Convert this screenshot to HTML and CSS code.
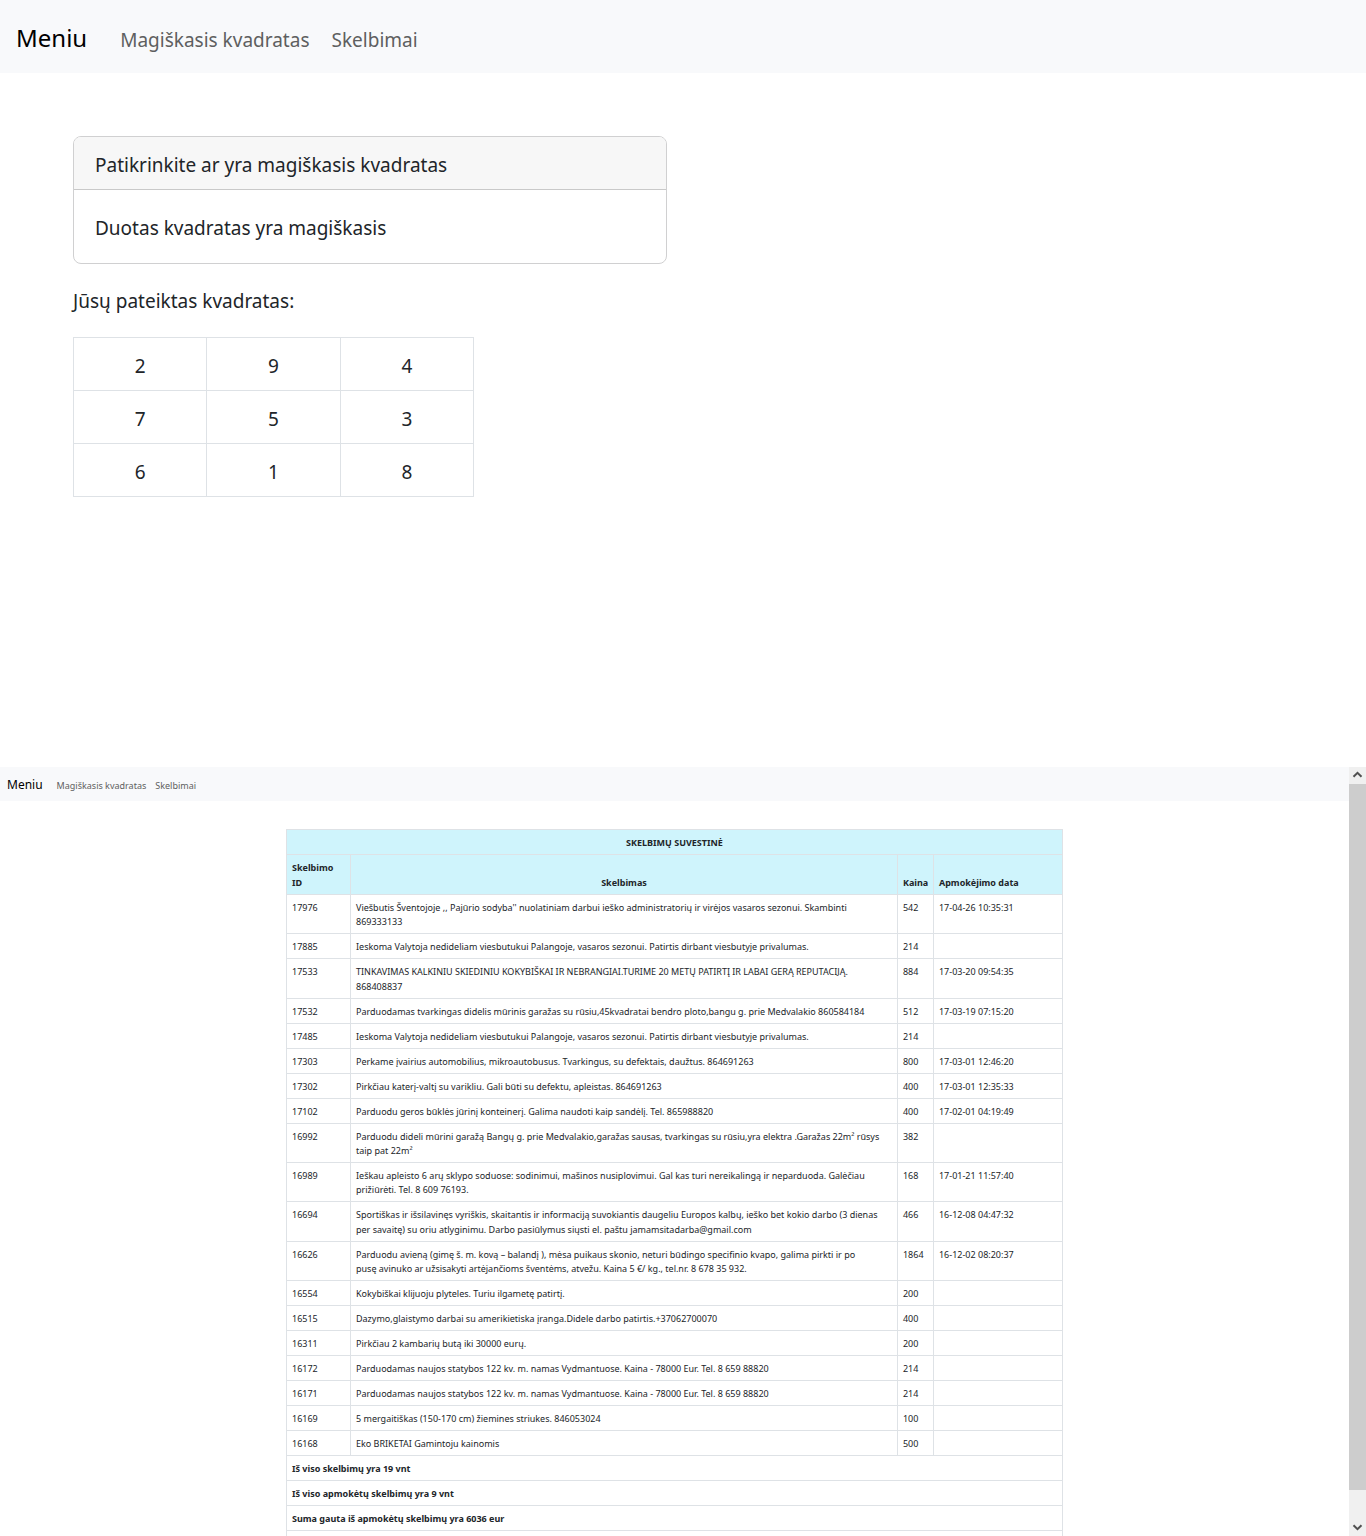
FILE: index.html
```html
<!DOCTYPE html>
<html lang="lt">
<head>
<meta charset="utf-8">
<meta name="viewport" content="width=device-width, initial-scale=1">
<title>Magiškasis kvadratas ir skelbimai</title>
<link rel="stylesheet" href="styles.css">
</head>
<body>
<section class="pane pane-square">
  <nav class="navbar">
    <a class="brand" href="#">Meniu</a>
    <a class="nav-link" href="#">Magiškasis kvadratas</a>
    <a class="nav-link" href="#">Skelbimai</a>
  </nav>
  <main class="content">
    <div class="card">
      <div class="card-header">Patikrinkite ar yra magiškasis kvadratas</div>
      <div class="card-body">Duotas kvadratas yra magiškasis</div>
    </div>
    <p class="caption">Jūsų pateiktas kvadratas:</p>
    <table class="square">
      <tbody>
        <tr><td>2</td><td>9</td><td>4</td></tr>
        <tr><td>7</td><td>5</td><td>3</td></tr>
        <tr><td>6</td><td>1</td><td>8</td></tr>
      </tbody>
    </table>
  </main>
</section>

<section class="pane pane-ads">
  <div class="view">
    <nav class="navbar navbar-small">
      <a class="brand" href="#">Meniu</a>
      <a class="nav-link" href="#">Magiškasis kvadratas</a>
      <a class="nav-link" href="#">Skelbimai</a>
    </nav>
    <table class="ads">
      <colgroup><col class="col-id"><col><col class="col-price"><col class="col-date"></colgroup>
      <thead>
        <tr class="title"><th colspan="4">SKELBIMŲ SUVESTINĖ</th></tr>
        <tr class="roomy"><th>Skelbimo ID</th><th class="center">Skelbimas</th><th>Kaina</th><th>Apmokėjimo data</th></tr>
      </thead>
      <tbody>
        <tr><td>17976</td><td>Viešbutis Šventojoje ,, Pajūrio sodyba'' nuolatiniam darbui ieško administratorių ir virėjos vasaros sezonui. Skambinti<br>869333133</td><td>542</td><td>17-04-26 10:35:31</td></tr>
        <tr><td>17885</td><td>Ieskoma Valytoja nedideliam viesbutukui Palangoje, vasaros sezonui. Patirtis dirbant viesbutyje privalumas.</td><td>214</td><td></td></tr>
        <tr class="roomy"><td>17533</td><td>TINKAVIMAS KALKINIU SKIEDINIU KOKYBIŠKAI IR NEBRANGIAI.TURIME 20 METŲ PATIRTĮ IR LABAI GERĄ REPUTACIJĄ.<br>868408837</td><td>884</td><td>17-03-20 09:54:35</td></tr>
        <tr><td>17532</td><td>Parduodamas tvarkingas didelis mūrinis garažas su rūsiu,45kvadratai bendro ploto,bangu g. prie Medvalakio 860584184</td><td>512</td><td>17-03-19 07:15:20</td></tr>
        <tr><td>17485</td><td>Ieskoma Valytoja nedideliam viesbutukui Palangoje, vasaros sezonui. Patirtis dirbant viesbutyje privalumas.</td><td>214</td><td></td></tr>
        <tr><td>17303</td><td>Perkame įvairius automobilius, mikroautobusus. Tvarkingus, su defektais, daužtus. 864691263</td><td>800</td><td>17-03-01 12:46:20</td></tr>
        <tr><td>17302</td><td>Pirkčiau katerį-valtį su varikliu. Gali būti su defektu, apleistas. 864691263</td><td>400</td><td>17-03-01 12:35:33</td></tr>
        <tr><td>17102</td><td>Parduodu geros būklės jūrinį konteinerį. Galima naudoti kaip sandėlį. Tel. 865988820</td><td>400</td><td>17-02-01 04:19:49</td></tr>
        <tr><td>16992</td><td>Parduodu dideli mūrini garažą Bangų g. prie Medvalakio,garažas sausas, tvarkingas su rūsiu,yra elektra .Garažas 22m² rūsys<br>taip pat 22m²</td><td>382</td><td></td></tr>
        <tr><td>16989</td><td>Ieškau apleisto 6 arų sklypo soduose: sodinimui, mašinos nusiplovimui. Gal kas turi nereikalingą ir neparduoda. Galėčiau<br>prižiūrėti. Tel. 8 609 76193.</td><td>168</td><td>17-01-21 11:57:40</td></tr>
        <tr class="roomy"><td>16694</td><td>Sportiškas ir išsilavinęs vyriškis, skaitantis ir informaciją suvokiantis daugeliu Europos kalbų, ieško bet kokio darbo (3 dienas<br>per savaitę) su oriu atlyginimu. Darbo pasiūlymus siųsti el. paštu jamamsitadarba@gmail.com</td><td>466</td><td>16-12-08 04:47:32</td></tr>
        <tr><td>16626</td><td>Parduodu avieną (gimę š. m. kovą – balandį ), mėsa puikaus skonio, neturi būdingo specifinio kvapo, galima pirkti ir po<br>pusę avinuko ar užsisakyti artėjančioms šventėms, atvežu. Kaina 5 €/ kg., tel.nr. 8 678 35 932.</td><td>1864</td><td>16-12-02 08:20:37</td></tr>
        <tr><td>16554</td><td>Kokybiškai klijuoju plyteles. Turiu ilgametę patirtį.</td><td>200</td><td></td></tr>
        <tr><td>16515</td><td>Dazymo,glaistymo darbai su amerikietiska įranga.Didele darbo patirtis.+37062700070</td><td>400</td><td></td></tr>
        <tr><td>16311</td><td>Pirkčiau 2 kambarių butą iki 30000 eurų.</td><td>200</td><td></td></tr>
        <tr><td>16172</td><td>Parduodamas naujos statybos 122 kv. m. namas Vydmantuose. Kaina - 78000 Eur. Tel. 8 659 88820</td><td>214</td><td></td></tr>
        <tr><td>16171</td><td>Parduodamas naujos statybos 122 kv. m. namas Vydmantuose. Kaina - 78000 Eur. Tel. 8 659 88820</td><td>214</td><td></td></tr>
        <tr><td>16169</td><td>5 mergaitiškas (150-170 cm) žiemines striukes. 846053024</td><td>100</td><td></td></tr>
        <tr><td>16168</td><td>Eko BRIKETAI Gamintoju kainomis</td><td>500</td><td></td></tr>
      </tbody>
      <tfoot>
        <tr><th colspan="4">Iš viso skelbimų yra 19 vnt</th></tr>
        <tr><th colspan="4">Iš viso apmokėtų skelbimų yra 9 vnt</th></tr>
        <tr><th colspan="4">Suma gauta iš apmokėtų skelbimų yra 6036 eur</th></tr>
        <tr><th colspan="4">&nbsp;</th></tr>
      </tfoot>
    </table>
  </div>
  <div class="scrollbar" aria-hidden="true">
    <svg class="arrow" viewBox="0 0 17 17"><path d="M4.500 9.800 8.500 5.800l4 4" fill="none" stroke="#505050" stroke-width="2"/></svg>
    <div class="track"><div class="thumb"></div></div>
    <svg class="arrow" viewBox="0 0 17 17"><path d="M4.500 6.200l4 4 4-4" fill="none" stroke="#505050" stroke-width="2"/></svg>
  </div>
</section>
</body>
</html>
```
FILE: styles.css
```css
* {
  box-sizing: border-box;
}

body {
  display: grid;
  grid-template-rows: calc(50vh - 1px) calc(50vh + 1px);
  height: 100vh;
  margin: 0;
  overflow: hidden;
  background: #fff;
  color: #212529;
  font-family: "Segoe UI", "Noto Sans", sans-serif;
  font-size: 19px;
  line-height: 32px;
}

.pane {
  min-height: 0;
  overflow: hidden;
}

/* Navigation bar */
.navbar {
  display: flex;
  align-items: baseline;
  gap: 22px;
  padding: 22px 16px 19px;
  background: #f8f9fb;
}

.navbar a {
  text-decoration: none;
  white-space: nowrap;
}

.navbar .brand {
  margin-right: 11px;
  color: #000;
  font-size: 24px;
  line-height: 32px;
}

.nav-link {
  color: #5e5f60;
  line-height: 28px;
}

/* Magic square page */
.content {
  padding: 63px 73px;
}

.card {
  width: 594px;
  max-width: 100%;
  border: 1px solid #d0d0d1;
  border-radius: 8px;
  overflow: hidden;
}

.card-header {
  padding: 12px 21px 8px;
  border-bottom: 1px solid #c9c9c9;
  background: #f7f7f7;
}

.card-body {
  padding: 22px 21px 19px;
}

.caption {
  margin: 21px 0 20px;
}

.square {
  width: 401px;
  border-collapse: collapse;
  table-layout: fixed;
}

.square td {
  padding: 12px 10px 8px;
  border: 1px solid #dee2e6;
  text-align: center;
}

/* Announcements page */
.pane-ads {
  display: flex;
}

.view {
  flex: 1;
  min-width: 0;
  overflow: hidden;
}

.navbar-small {
  gap: 9px;
  padding: 10px 7px 8px;
  font-size: 9px;
}

.navbar-small .brand {
  margin-right: 5px;
  font-size: 12px;
  line-height: 16px;
}

.navbar-small .nav-link {
  line-height: 14px;
}

.ads {
  width: 777px;
  margin: 28px auto 0;
  border-collapse: collapse;
  table-layout: fixed;
  font-size: 9px;
  line-height: 14px;
}

.col-id {
  width: 64px;
}

.col-price {
  width: 36px;
}

.col-date {
  width: 129px;
}

.ads th,
.ads td {
  padding: 6px 5px 4px;
  border: 1px solid #dee2e6;
  text-align: left;
  vertical-align: top;
}

.ads td {
  white-space: nowrap;
}

.ads thead th {
  background: #cff4fc;
  vertical-align: bottom;
}

.ads .title th,
.ads .center {
  text-align: center;
}

.ads .roomy th,
.ads .roomy td {
  padding: 5px 5px 4px;
  line-height: 15px;
}

/* Scroll bar */
.scrollbar {
  display: flex;
  flex-direction: column;
  width: 17px;
  background: #f0f0f0;
}

.arrow {
  display: block;
  width: 17px;
  height: 17px;
}

.track {
  flex: 1;
}

.thumb {
  height: 96%;
  background: #cdcdcd;
}
```
